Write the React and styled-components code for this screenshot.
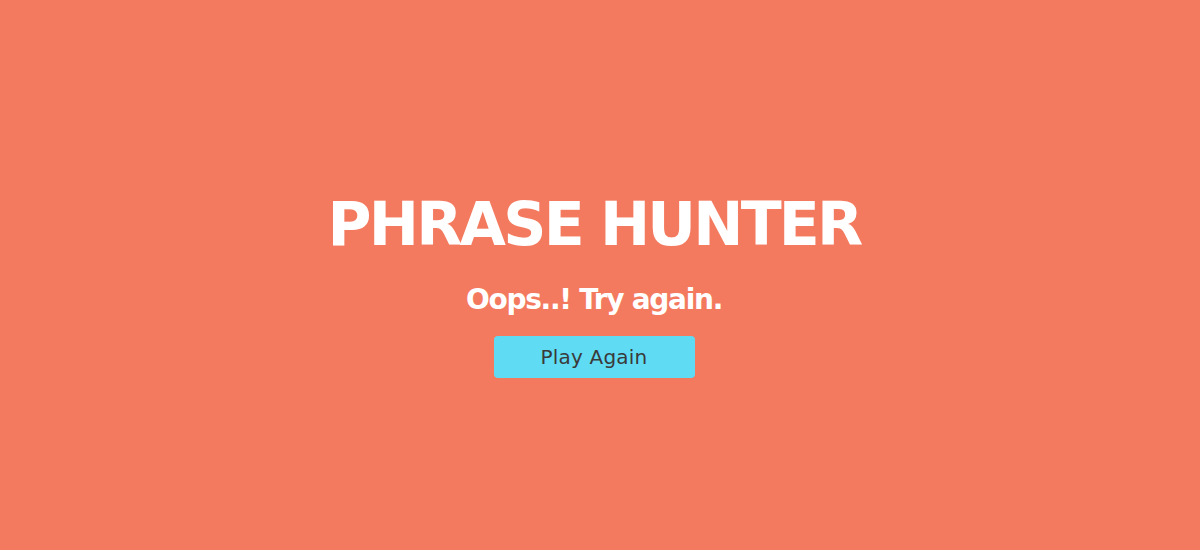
import React from "react";
import styled, { createGlobalStyle } from "styled-components";

const Global = createGlobalStyle`
  html, body { margin: 0; padding: 0; }
  body { background: #f47a5f; font-family: "DejaVu Sans", "Noto Sans", sans-serif; }
`;

const Overlay = styled.div`
  box-sizing: border-box;
  width: 1200px;
  height: 550px;
  padding-right: 12px;
  background: #f47a5f;
  display: flex;
  flex-direction: column;
  align-items: center;
  justify-content: center;
  color: #fff;
`;

const Title = styled.h2`
  margin: 0;
  font-family: "DejaVu Sans", sans-serif;
  font-weight: 700;
  font-size: 60px;
  line-height: 1;
  letter-spacing: -2.8px;
  padding-top: 22px;
`;

const Message = styled.h1`
  margin: 32px 0 0;
  font-family: "DejaVu Sans", sans-serif;
  font-weight: 700;
  font-size: 28px;
  line-height: 1;
  letter-spacing: -1.3px;
`;

const Button = styled.button`
  margin-top: 22px;
  width: 201px;
  height: 42px;
  border: none;
  border-radius: 4px;
  background: #5fdbf4;
  color: #3a3a3a;
  font-family: "DejaVu Sans", sans-serif;
  font-size: 20px;
  letter-spacing: 0.2px;
  cursor: pointer;
`;

export default function App() {
  return (
    <>
      <Global />
      <Overlay>
        <Title>PHRASE HUNTER</Title>
        <Message>Oops..! Try again.</Message>
        <Button>Play Again</Button>
      </Overlay>
    </>
  );
}
